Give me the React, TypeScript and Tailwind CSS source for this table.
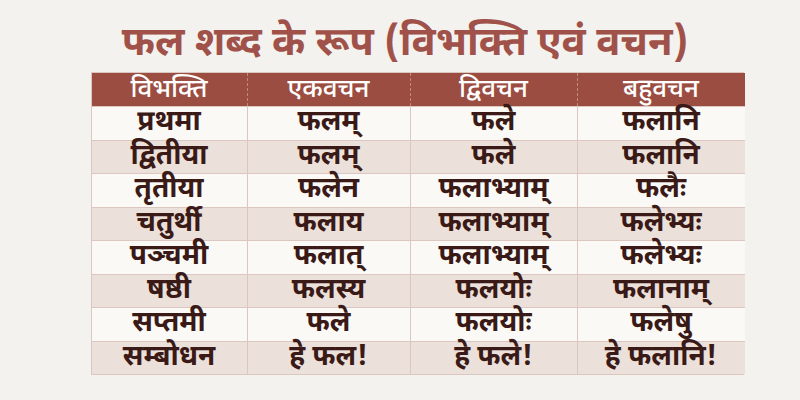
import React from "react";

const rows: string[][] = [
  ["प्रथमा", "फलम्", "फले", "फलानि"],
  ["द्वितीया", "फलम्", "फले", "फलानि"],
  ["तृतीया", "फलेन", "फलाभ्याम्", "फलैः"],
  ["चतुर्थी", "फलाय", "फलाभ्याम्", "फलेभ्यः"],
  ["पञ्चमी", "फलात्", "फलाभ्याम्", "फलेभ्यः"],
  ["षष्ठी", "फलस्य", "फलयोः", "फलानाम्"],
  ["सप्तमी", "फले", "फलयोः", "फलेषु"],
  ["सम्बोधन", "हे फल!", "हे फले!", "हे फलानि!"],
];

const heads = ["विभक्ति", "एकवचन", "द्विवचन", "बहुवचन"];

export default function App() {
  return (
    <div className="w-[800px] h-[400px] bg-[#f4f2ee] font-['Noto_Sans_Devanagari','Noto_Sans','Lohit_Devanagari',sans-serif] flex flex-col items-center">
      <h1 className="ml-[10px] mt-[18px] h-[54px] text-[40px] leading-[54px] font-bold text-[#a0524a]">
        फल शब्द के रूप (विभक्ति एवं वचन)
      </h1>
      <div className="ml-[34px] w-[653px] grid grid-cols-[155px_163px_167px_168px] border border-[#dcc7c0]">
        {heads.map((h, i) => (
          <div
            key={h}
            className={`h-[33px] bg-[#9c4d42] text-white text-[26px] leading-[36px] text-center font-medium ${i > 0 ? "border-l border-dashed border-[#c08a80]" : ""}`}
          >
            {h}
          </div>
        ))}
        {rows.map((r, ri) =>
          r.map((c, ci) => (
            <div
              key={ri + "-" + ci}
              className={`h-[33.5px] text-[28px] leading-[32px] text-center font-bold text-[#3a1a16] border-t border-[#dcc7c0] ${ci > 0 ? "border-l" : ""} ${ri % 2 === 1 ? "bg-[#ece0da]" : "bg-[#fbf9f6]"}`}
            >
              {c}
            </div>
          ))
        )}
      </div>
    </div>
  );
}
